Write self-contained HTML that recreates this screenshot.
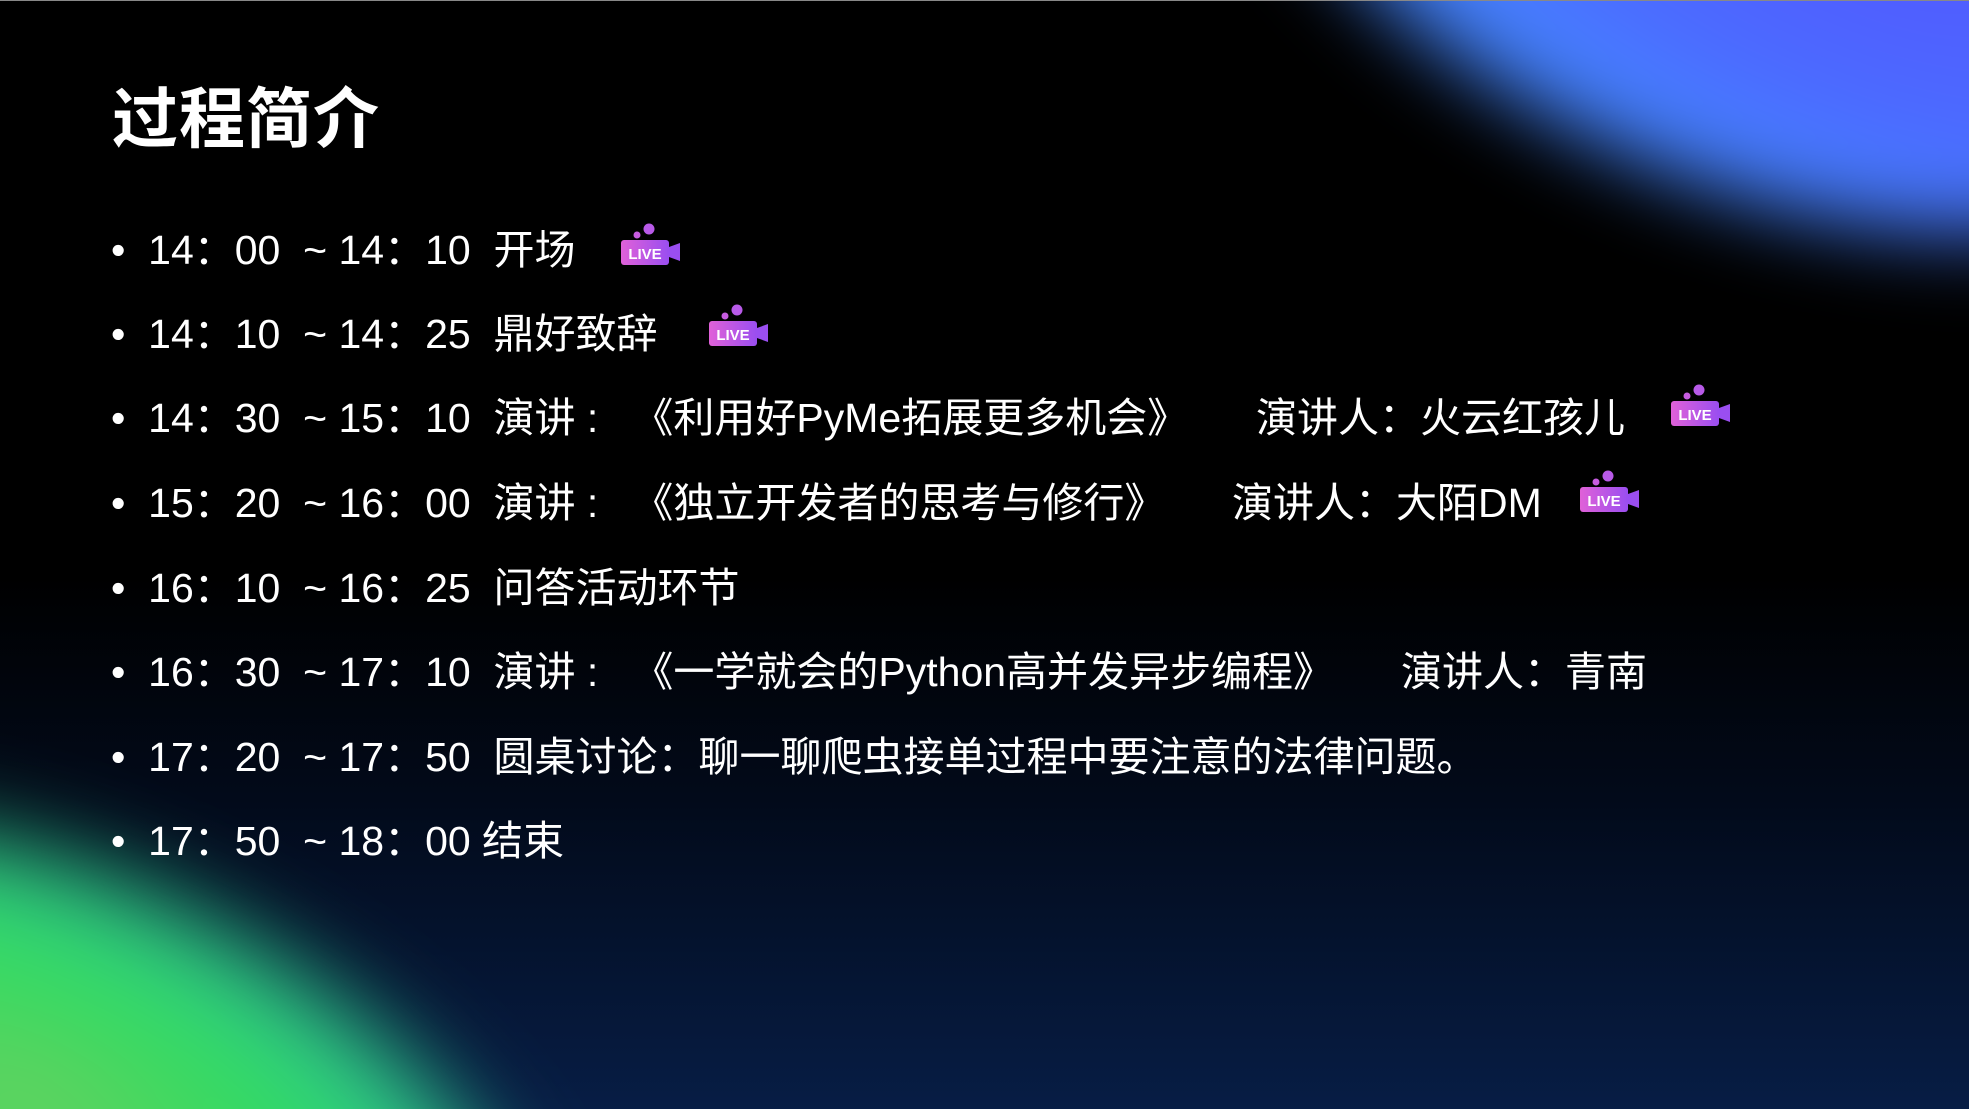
<!DOCTYPE html>
<html><head><meta charset="utf-8"><style>
html,body{margin:0;padding:0;width:1969px;height:1109px;overflow:hidden;background:#000}
#w{width:1969px;height:1109px;position:relative;overflow:hidden;background:linear-gradient(180deg,#000 0%,#000 52%,#020a1a 72%,#071d45 100%);font-family:"Liberation Sans","Noto Sans CJK SC",sans-serif;color:#fff}
.blob{position:absolute;border-radius:50%}
.b1{left:1200px;top:-470px;width:1150px;height:660px;background:radial-gradient(ellipse at 60% 50%,#5355ff 0%,#4b6cff 45%,#4488ff 68%,rgba(40,80,200,0) 100%);transform:rotate(22deg);filter:blur(40px)}
.b2{left:-420px;top:880px;width:980px;height:500px;background:radial-gradient(ellipse at 45% 50%,#6ad060 0%,#30dc60 40%,#2fc890 64%,rgba(20,90,120,0) 100%);transform:rotate(25deg);filter:blur(45px)}
.topline{position:absolute;left:0;top:0;width:1969px;height:1px;background:#888}
h1{position:absolute;left:112px;top:66px;margin:0;font-size:66px;font-weight:bold;letter-spacing:1px}
.l{position:absolute;left:111px;font-size:41px;white-space:pre;line-height:50px}
.a{position:absolute;font-size:41px;white-space:pre;line-height:50px}
.ic{position:absolute;width:62px;height:46px}
</style></head><body><div id="w">
<div class="blob b1"></div><div class="blob b2"></div>
<div class="topline"></div>
<h1>过程简介</h1>
<svg width="0" height="0" style="position:absolute"><defs><linearGradient id="g" x1="0" x2="1"><stop offset="0" stop-color="#e061d8"/><stop offset="1" stop-color="#9a4ef0"/></linearGradient></defs></svg>
<div class="l" style="top:225px">•  14：00  ~ 14：10  开场</div>
<div class="l" style="top:309px">•  14：10  ~ 14：25  鼎好致辞</div>
<div class="l" style="top:393px">•  14：30  ~ 15：10  演讲 :   《利用好PyMe拓展更多机会》</div>
<div class="a" style="left:1256px;top:393px">演讲人：火云红孩儿</div>
<div class="l" style="top:478px">•  15：20  ~ 16：00  演讲 :   《独立开发者的思考与修行》</div>
<div class="a" style="left:1232px;top:478px">演讲人：大陌DM</div>
<div class="l" style="top:563px">•  16：10  ~ 16：25  问答活动环节</div>
<div class="l" style="top:647px">•  16：30  ~ 17：10  演讲 :   《一学就会的Python高并发异步编程》</div>
<div class="a" style="left:1401px;top:647px">演讲人：青南</div>
<div class="l" style="top:732px">•  17：20  ~ 17：50  圆桌讨论：聊一聊爬虫接单过程中要注意的法律问题。</div>
<div class="l" style="top:816px">•  17：50  ~ 18：00 结束</div>

<svg class="ic" style="left:619px;top:223px" viewBox="0 0 62 46"><circle cx="30" cy="6" r="5.5" fill="#b85ae8"/><circle cx="18" cy="12" r="3.5" fill="#c75ce0"/><rect x="2" y="17" width="48" height="25" rx="3" fill="url(#g)"/><path d="M50 24 L61 20 L61 38 L50 34Z" fill="#9a4ef0"/><text x="26" y="36" font-size="15" font-weight="bold" fill="#fff" text-anchor="middle" font-family="Liberation Sans">LIVE</text></svg>
<svg class="ic" style="left:707px;top:304px" viewBox="0 0 62 46"><circle cx="30" cy="6" r="5.5" fill="#b85ae8"/><circle cx="18" cy="12" r="3.5" fill="#c75ce0"/><rect x="2" y="17" width="48" height="25" rx="3" fill="url(#g)"/><path d="M50 24 L61 20 L61 38 L50 34Z" fill="#9a4ef0"/><text x="26" y="36" font-size="15" font-weight="bold" fill="#fff" text-anchor="middle" font-family="Liberation Sans">LIVE</text></svg>
<svg class="ic" style="left:1669px;top:384px" viewBox="0 0 62 46"><circle cx="30" cy="6" r="5.5" fill="#b85ae8"/><circle cx="18" cy="12" r="3.5" fill="#c75ce0"/><rect x="2" y="17" width="48" height="25" rx="3" fill="url(#g)"/><path d="M50 24 L61 20 L61 38 L50 34Z" fill="#9a4ef0"/><text x="26" y="36" font-size="15" font-weight="bold" fill="#fff" text-anchor="middle" font-family="Liberation Sans">LIVE</text></svg>
<svg class="ic" style="left:1578px;top:470px" viewBox="0 0 62 46"><circle cx="30" cy="6" r="5.5" fill="#b85ae8"/><circle cx="18" cy="12" r="3.5" fill="#c75ce0"/><rect x="2" y="17" width="48" height="25" rx="3" fill="url(#g)"/><path d="M50 24 L61 20 L61 38 L50 34Z" fill="#9a4ef0"/><text x="26" y="36" font-size="15" font-weight="bold" fill="#fff" text-anchor="middle" font-family="Liberation Sans">LIVE</text></svg>
</div></body></html>
